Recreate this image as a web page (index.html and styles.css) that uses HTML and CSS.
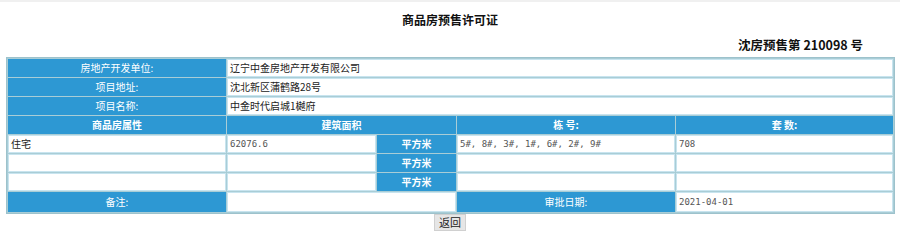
FILE: index.html
```html
<!DOCTYPE html>
<html lang="zh-CN">
<head>
<meta charset="UTF-8">
<title>商品房预售许可证</title>
<link rel="stylesheet" href="styles.css">
</head>
<body>
<div class="page">
  <h1 class="title">商品房预售许可证</h1>
  <p class="cert-no">沈房预售第 210098 号</p>
  <table class="permit">
    <colgroup>
      <col class="c1"><col class="c2"><col class="c3"><col class="c4"><col class="c5">
    </colgroup>
    <tr>
      <td class="label">房地产开发单位:</td>
      <td class="value" colspan="4">辽宁中金房地产开发有限公司</td>
    </tr>
    <tr>
      <td class="label">项目地址:</td>
      <td class="value" colspan="4">沈北新区蒲鹤路28号</td>
    </tr>
    <tr>
      <td class="label">项目名称:</td>
      <td class="value" colspan="4">中金时代启城1樾府</td>
    </tr>
    <tr>
      <td class="head">商品房属性</td>
      <td class="head" colspan="2">建筑面积</td>
      <td class="head">栋 号:</td>
      <td class="head">套 数:</td>
    </tr>
    <tr>
      <td class="value">住宅</td>
      <td class="value num">62076.6</td>
      <td class="head">平方米</td>
      <td class="value num">5#, 8#, 3#, 1#, 6#, 2#, 9#</td>
      <td class="value num">708</td>
    </tr>
    <tr>
      <td class="value"></td>
      <td class="value"></td>
      <td class="head">平方米</td>
      <td class="value"></td>
      <td class="value"></td>
    </tr>
    <tr>
      <td class="value"></td>
      <td class="value"></td>
      <td class="head">平方米</td>
      <td class="value"></td>
      <td class="value"></td>
    </tr>
    <tr class="last">
      <td class="label">备注:</td>
      <td class="value" colspan="2"></td>
      <td class="label">审批日期:</td>
      <td class="value num">2021-04-01</td>
    </tr>
  </table>
  <div class="actions">
    <button class="back" type="button">返回</button>
  </div>
</div>
</body>
</html>
```

FILE: styles.css
```css
body {
  margin: 0;
  background: #fff;
  font-family: "Noto Sans CJK SC", "DejaVu Sans", sans-serif;
  color: #111;
}
.page {
  padding: 0 6px 0 6px;
  border-top: 2px solid #f0f0f0;
}
.title {
  margin: 0;
  padding-top: 10px;
  height: 20px;
  font-size: 12px;
  line-height: 16px;
  text-align: center;
  font-weight: bold;
}
.cert-no {
  margin: 0;
  padding-right: 31px;
  height: 25px;
  font-size: 12.5px;
  line-height: 26px;
  text-align: right;
  font-weight: bold;
}
.permit {
  width: 888px;
  border-collapse: separate;
  border-spacing: 1px;
  background: #a9cdd6;
  border: 1px solid #9dc2cc;
  table-layout: fixed;
  font-size: 10px;
}
.c1 { width: 218px; }
.c2 { width: 149px; }
.c3 { width: 79px; }
.c4 { width: 218px; }
.c5 { width: 217px; }
.permit td {
  height: 16px;
  padding: 0 2px;
  line-height: 16px;
  border: 1px solid #c8e4ef;
  overflow: hidden;
  white-space: nowrap;
}
.permit .last td {
  height: 18px;
}
.label,
.head {
  background: #2d98d3;
  color: #fff;
  text-align: center;
  border-color: #2d98d3 !important;
}
.head {
  font-weight: bold;
}
.value {
  background: #fff;
  color: #222;
  text-align: left;
}
.num {
  font-family: "DejaVu Sans Mono", monospace;
  font-size: 9px;
  color: #555;
}
.actions {
  display: flex;
  justify-content: center;
}
.back {
  margin: 0;
  padding: 0 4px;
  height: 17px;
  font-family: "Noto Sans CJK SC", sans-serif;
  font-size: 11px;
  line-height: 15px;
  background: #e6e6e6;
  border: 1px solid #d0d0d0;
  color: #222;
}
```
